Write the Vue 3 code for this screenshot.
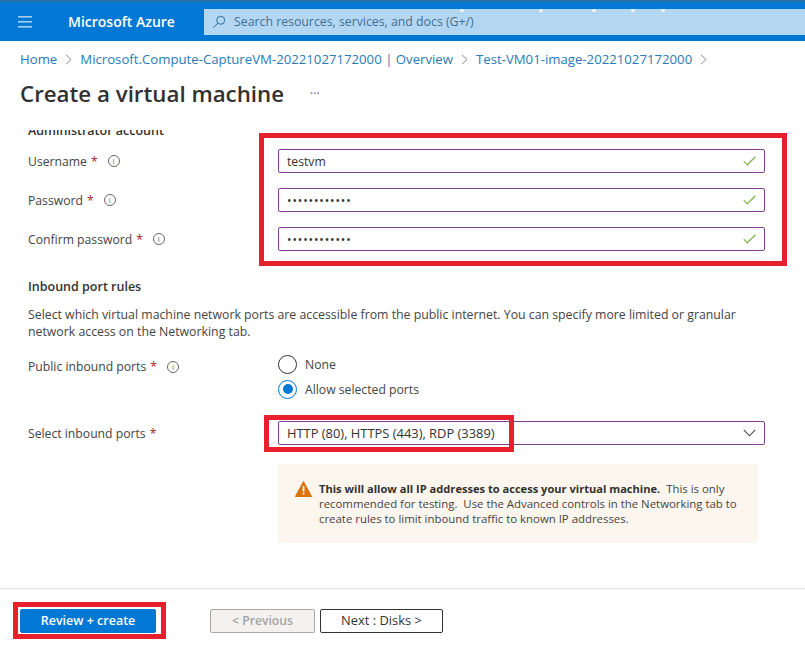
<template>
  <div class="page">
    <header class="topbar">
      <svg class="menu-icon" width="16" height="12" viewBox="0 0 16 12">
        <rect x="1" y="0" width="14" height="1.6" fill="#a6d0f2" />
        <rect x="1" y="5" width="14" height="1.6" fill="#a6d0f2" />
        <rect x="1" y="10" width="14" height="1.6" fill="#a6d0f2" />
      </svg>
      <span class="brand">Microsoft Azure</span>
      <div class="search">
        <svg width="14" height="14" viewBox="0 0 14 14" fill="none" stroke="#2f6f9f" stroke-width="1">
          <circle cx="8.7" cy="5.3" r="4" />
          <path d="M5.8 8.2 1.2 12.8" />
        </svg>
        <span>Search resources, services, and docs (G+/)</span>
        <i v-for="x in dots" :key="x" class="dot" :style="{ left: x + 'px' }"></i>
      </div>
    </header>

    <nav class="crumbs">
      <template v-for="c in crumbs" :key="c">
        <a>{{ c }}</a>
        <svg width="7" height="11" viewBox="0 0 7 11" fill="none" stroke="#8a8a8a" stroke-width="1"><path d="M1 .8 6 5.5 1 10.2" /></svg>
      </template>
    </nav>

    <div class="title-row">
      <h1>Create a virtual machine</h1>
      <span class="more">···</span>
    </div>

    <main class="form">
      <h2 class="clipped">Administrator account</h2>

      <div v-for="f in fields" :key="f.label" class="row">
        <label>{{ f.label }}<b>*</b><span class="info">i</span></label>
        <div class="input">
          <span :class="{ secret: f.secret }">{{ f.value }}</span>
          <svg width="13" height="10" viewBox="0 0 13 10" fill="none" stroke="#7fb24f" stroke-width="1.2"><path d="M.8 5.2 4.3 8.8 12.4.8" /></svg>
        </div>
      </div>

      <h2 class="rules">Inbound port rules</h2>
      <p class="desc">Select which virtual machine network ports are accessible from the public internet. You can specify more limited or granular network access on the Networking tab.</p>

      <div class="row radios-row">
        <label>Public inbound ports<b>*</b><span class="info">i</span></label>
        <div class="radios">
          <div class="radio"><span class="circle"></span>None</div>
          <div class="radio"><span class="circle on"></span>Allow selected ports</div>
        </div>
      </div>

      <div class="row select-row">
        <label>Select inbound ports<b>*</b></label>
        <div class="input">
          <span class="ports">HTTP (80), HTTPS (443), RDP (3389)</span>
          <svg width="13" height="8" viewBox="0 0 13 8" fill="none" stroke="#444" stroke-width="1.1"><path d="M.8.8 6.5 6.8 12.2.8" /></svg>
        </div>
      </div>

      <div class="warning">
        <svg width="17" height="16" viewBox="0 0 17 16">
          <path d="M8.5.5 16.6 15.5H.4Z" fill="#d9730d" stroke="#d9730d" stroke-linejoin="round" />
          <rect x="7.7" y="5" width="1.7" height="5.6" fill="#fff" />
          <rect x="7.7" y="11.7" width="1.7" height="1.8" fill="#fff" />
        </svg>
        <p><strong>This will allow all IP addresses to access your virtual machine.</strong>&nbsp; This is only recommended for testing.&nbsp; Use the Advanced controls in the Networking tab to create rules to limit inbound traffic to known IP addresses.</p>
      </div>
    </main>

    <footer class="footer">
      <button class="btn primary">Review + create</button>
      <button class="btn disabled">&lt; Previous</button>
      <button class="btn next">Next : Disks &gt;</button>
    </footer>

    <div class="mark mark-fields"></div>
    <div class="mark mark-ports"></div>
    <div class="mark mark-review"></div>
  </div>
</template>

<script setup>
const dots = [256, 335, 388, 427, 457]
const crumbs = [
  'Home',
  'Microsoft.Compute-CaptureVM-20221027172000 | Overview',
  'Test-VM01-image-20221027172000',
]
const fields = [
  { label: 'Username', value: 'testvm' },
  { label: 'Password', value: '••••••••••••', secret: true },
  { label: 'Confirm password', value: '••••••••••••', secret: true },
]
</script>

<style>
html, body { margin: 0; background: #fff; }
</style>

<style scoped>
.page {
  position: relative;
  width: 805px;
  height: 647px;
  overflow: hidden;
  background: #fff;
  color: #333;
  font-family: "Open Sans", "Noto Sans", sans-serif;
  font-size: 12.2px;
}
.topbar {
  display: flex;
  align-items: center;
  height: 39px;
  padding-left: 17px;
  background: #0078d4;
  border-top: 2px solid #2a6fa8;
}
.menu-icon { flex: none; }
.brand {
  margin-left: 35px;
  width: 136px;
  color: #fff;
  font-size: 14px;
  font-weight: 600;
  white-space: nowrap;
}
.search {
  position: relative;
  flex: 1;
  display: flex;
  align-items: center;
  gap: 8px;
  height: 26px;
  padding-left: 8px;
  background: #b3d6f2;
  color: #3f6f92;
  font-size: 12.3px;
}
.dot {
  position: absolute;
  top: 0;
  width: 4px;
  height: 3px;
  border-radius: 50%;
  background: #f2f8fd;
}
.crumbs {
  display: flex;
  align-items: center;
  gap: 8px;
  height: 18px;
  margin: 9px 0 0 20px;
  color: #2a7ab8;
  font-size: 13.2px;
  white-space: nowrap;
}
.title-row {
  display: flex;
  align-items: center;
  height: 36px;
  margin: 7px 0 0 20px;
}
h1 {
  margin: 0;
  color: #323130;
  font-size: 22.3px;
  font-weight: 600;
}
.more {
  margin-left: 26px;
  color: #666;
  font-size: 12px;
}
.form {
  box-sizing: border-box;
  height: 459px;
  margin-top: 19px;
  padding-left: 28px;
  overflow: hidden;
  border-bottom: 1px solid #e1e1e1;
}
h2 {
  margin: 0;
  color: #323130;
  font-size: 12.5px;
  font-weight: 600;
}
.clipped {
  width: 150px;
  height: 4px;
  padding-top: 1px;
  line-height: 0;
}
.row {
  display: grid;
  grid-template-columns: 250px 487px;
  align-items: center;
  margin-bottom: 15px;
}
.clipped + .row { margin-top: 14px; }
label {
  display: flex;
  align-items: center;
  color: #444;
  white-space: pre;
}
label b {
  color: #a4262c;
  font-weight: 400;
  margin-left: 4px;
}
.info {
  display: inline-flex;
  align-items: center;
  justify-content: center;
  width: 10px;
  height: 10px;
  margin-left: 10px;
  border: 1px solid #666;
  border-radius: 50%;
  color: #666;
  font-size: 8px;
  line-height: 1;
}
.input {
  display: flex;
  align-items: center;
  justify-content: space-between;
  box-sizing: border-box;
  height: 24px;
  padding: 0 8px;
  border: 1px solid #7b3f98;
  border-radius: 2px;
  color: #333;
}
.secret {
  font-size: 12px;
  letter-spacing: 0.87px;
}
.ports { font-size: 12.9px; }
.rules { margin-top: 27px; }
.desc {
  width: 720px;
  margin: 11px 0 0;
  color: #444;
  font-size: 12.3px;
  line-height: 17px;
}
.radios-row {
  align-items: start;
  margin: 14px 0 0;
}
.radios-row label { margin-top: 4px; }
.radios {
  display: flex;
  flex-direction: column;
  gap: 5px;
}
.radio {
  display: flex;
  align-items: center;
  gap: 8px;
  height: 20px;
  color: #444;
}
.circle {
  position: relative;
  box-sizing: border-box;
  width: 19px;
  height: 19px;
  border: 1px solid #333;
  border-radius: 50%;
}
.circle.on { border-color: #0078d4; }
.circle.on::after {
  content: "";
  position: absolute;
  inset: 3.5px;
  border-radius: 50%;
  background: #0078d4;
}
.select-row { margin: 22px 0 0; }
.warning {
  display: flex;
  gap: 7px;
  box-sizing: border-box;
  width: 480px;
  height: 79px;
  margin: 19px 0 0 250px;
  padding: 17px 17px 0;
  background: #fdf6ee;
}
.warning svg { flex: none; }
.warning p {
  margin: 0;
  color: #444;
  font-size: 11.4px;
  line-height: 15px;
}
.warning strong { color: #323130; font-size: 11.1px; font-weight: 700; }
.footer {
  display: flex;
  align-items: center;
  box-sizing: border-box;
  height: 58px;
  padding: 6px 0 0 20px;
}
.btn {
  box-sizing: border-box;
  height: 24px;
  padding: 0 0 2px;
  border: 1px solid #333;
  border-radius: 2px;
  background: #fff;
  color: #333;
  font-family: inherit;
  font-size: 12.9px;
}
.primary {
  width: 136px;
  margin-right: 54px;
  border-color: #0078d4;
  background: #0078d4;
  color: #fff;
  font-size: 12.5px;
  font-weight: 600;
}
.disabled {
  width: 105px;
  margin-right: 5px;
  border-color: #a9a9a9;
  background: #f3f2f1;
  color: #a3a3a3;
  font-size: 12.2px;
  font-weight: 600;
}
.next { width: 123px; }
.mark {
  position: absolute;
  box-sizing: border-box;
  border: 5px solid #e81f2d;
}
.mark-fields { left: 259px; top: 133px; width: 528px; height: 133px; }
.mark-ports { left: 264px; top: 415px; width: 250px; height: 37px; }
.mark-review { left: 13px; top: 602px; width: 153px; height: 37px; }
</style>
